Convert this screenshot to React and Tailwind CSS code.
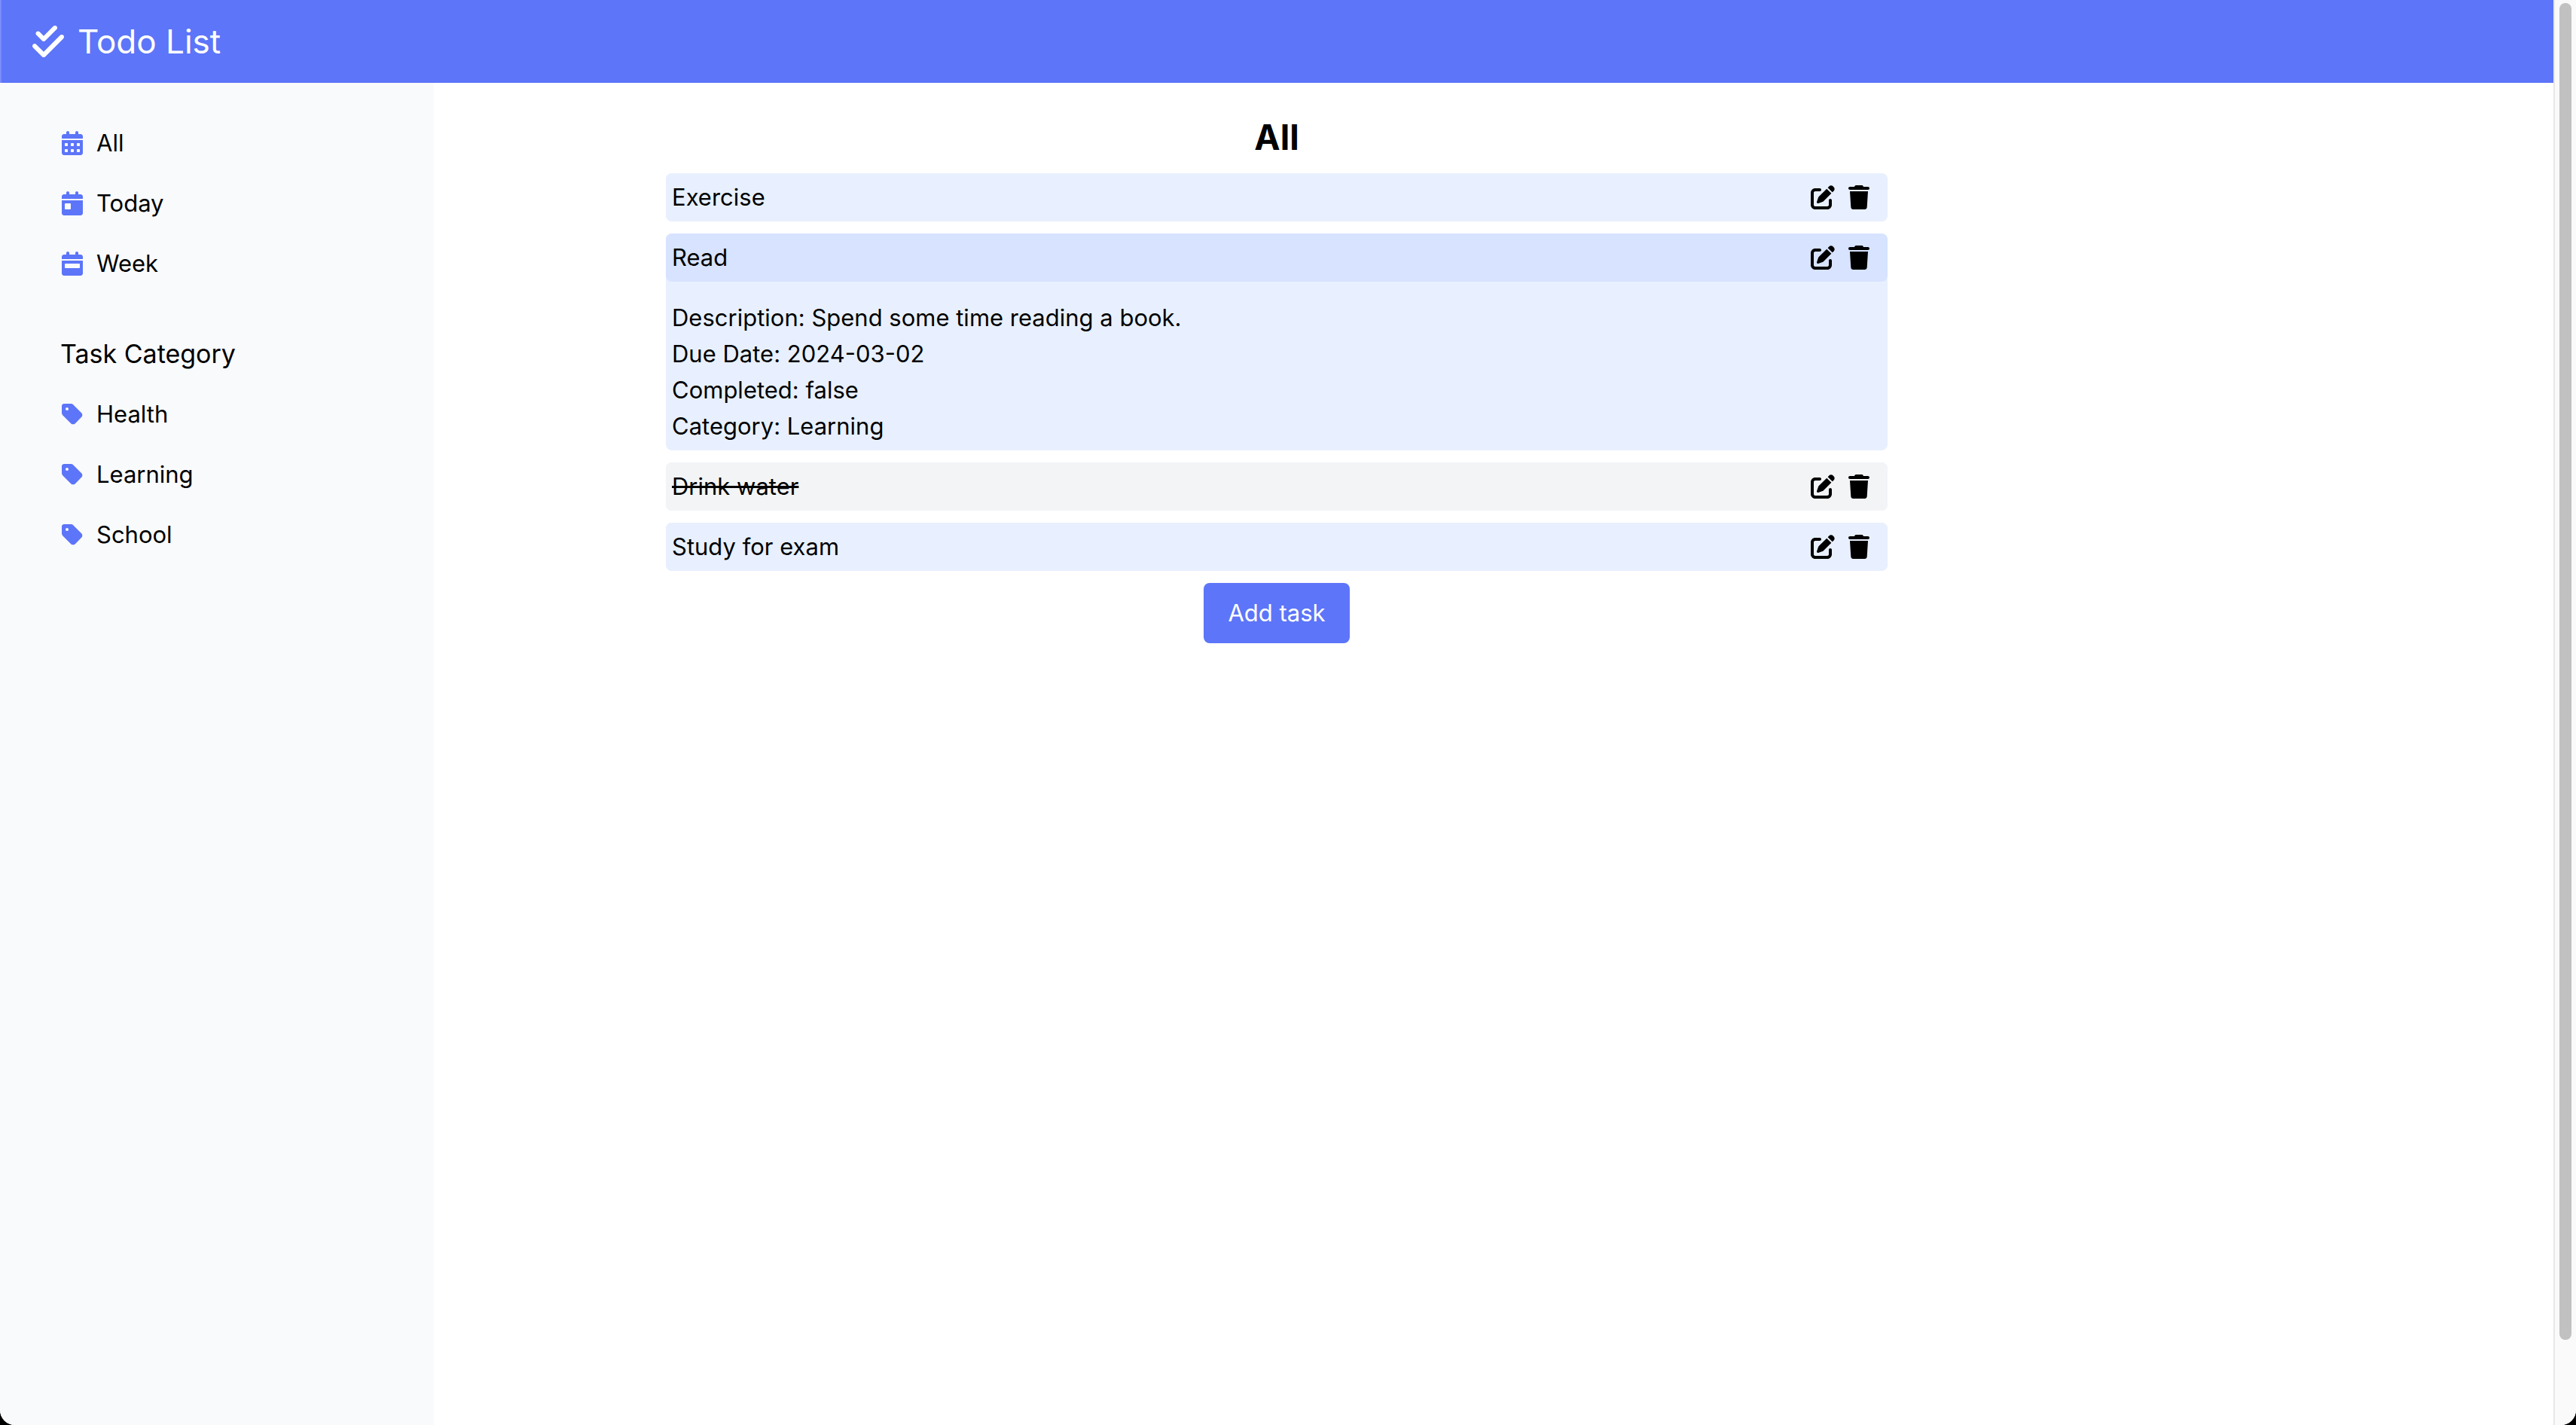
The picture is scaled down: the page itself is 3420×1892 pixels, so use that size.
import { useState } from "react";
import {
  FaCalendarDay,
  FaCalendarDays,
  FaCalendarWeek,
  FaCheckDouble,
  FaPenToSquare,
  FaTag,
  FaTrash,
} from "react-icons/fa6";

const views = [
  { name: "All", Icon: FaCalendarDays },
  { name: "Today", Icon: FaCalendarDay },
  { name: "Week", Icon: FaCalendarWeek },
];

const categories = ["Health", "Learning", "School"];

const tasks = [
  { title: "Exercise" },
  {
    title: "Read",
    description: "Spend some time reading a book.",
    due: "2024-03-02",
    category: "Learning",
  },
  { title: "Drink water", completed: true },
  { title: "Study for exam" },
];

function NavItem({ Icon, name }) {
  return (
    <li>
      <button type="button" className="flex h-12 items-center gap-[18px] px-0.5">
        <Icon className="h-8 w-7 text-[#5d75f8]" />
        {name}
      </button>
    </li>
  );
}

function Task({ task, open, onToggle }) {
  const tone = task.completed ? "bg-gray-100" : open ? "bg-[#d7e3ff]" : "bg-[#e8f0ff]";
  return (
    <li className="rounded-lg bg-[#e8f0ff]">
      <div className={"flex items-center rounded-lg py-2 pl-2 pr-6 " + tone}>
        <button
          type="button"
          aria-expanded={open}
          onClick={onToggle}
          className={"grow text-left " + (task.completed ? "line-through" : "")}
        >
          {task.title}
        </button>
        <div className="flex items-center gap-[18px]">
          <button type="button" aria-label={"Edit " + task.title}>
            <FaPenToSquare className="size-8" />
          </button>
          <button type="button" aria-label={"Delete " + task.title}>
            <FaTrash className="h-8 w-7" />
          </button>
        </div>
      </div>
      {open && task.description && (
        <div className="px-2 pb-2 pt-6">
          <p>Description: {task.description}</p>
          <p>Due Date: {task.due}</p>
          <p>Completed: {String(Boolean(task.completed))}</p>
          <p>Category: {task.category}</p>
        </div>
      )}
    </li>
  );
}

export default function App() {
  const [openTask, setOpenTask] = useState("Read");

  return (
    <div className="h-screen bg-black">
      <div className="flex h-full overflow-hidden rounded-b-[20px] bg-white font-['Inter',sans-serif] text-[31px] leading-[48px] text-black">
        <div className="flex grow flex-col">
          <header className="flex h-[110px] shrink-0 items-center gap-[18px] border-l-2 border-[#7a8df9] bg-[#5d75f8] px-[41px] text-white">
            <FaCheckDouble className="h-12 w-[42px]" />
            <span className="text-[44px]">Todo List</span>
          </header>
          <div className="grid grow grid-cols-[576px_1fr_576px]">
            <aside className="bg-[#f9fafc] px-20 pt-14">
              <nav aria-label="Tasks">
                <ul className="flex flex-col gap-8">
                  {views.map((view) => (
                    <NavItem key={view.name} {...view} />
                  ))}
                </ul>
                <h2 className="mb-8 mt-[72px] text-[34px]">Task Category</h2>
                <ul className="flex flex-col gap-8">
                  {categories.map((name) => (
                    <NavItem key={name} name={name} Icon={FaTag} />
                  ))}
                </ul>
              </nav>
            </aside>
            <main className="flex flex-col items-center px-[308px] pt-10">
              <h1 className="mb-4 text-[46px] font-bold leading-[64px]">All</h1>
              <ul className="mb-4 flex w-full flex-col gap-4">
                {tasks.map((task) => (
                  <Task
                    key={task.title}
                    task={task}
                    open={openTask === task.title}
                    onToggle={() => setOpenTask(openTask === task.title ? "" : task.title)}
                  />
                ))}
              </ul>
              <button type="button" className="rounded-lg bg-[#5d75f8] px-8 py-4 text-white">
                Add task
              </button>
            </main>
          </div>
        </div>
        <div className="flex w-[30px] shrink-0 justify-center border-l-2 border-[#e7e7e7] bg-[#fafafa] pt-1">
          <div className="h-[94%] w-4 rounded-full bg-[#c1c1c1]" />
        </div>
      </div>
    </div>
  );
}
